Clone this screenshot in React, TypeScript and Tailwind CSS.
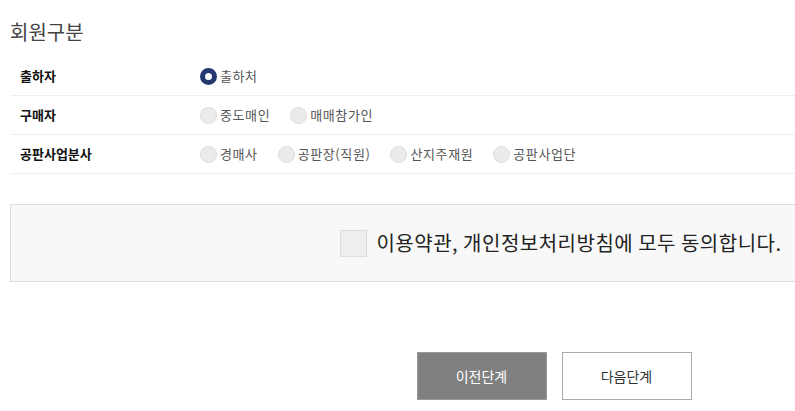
import React, { useState } from "react";

interface Row {
  label: string;
  options: string[];
}

const rows: Row[] = [
  { label: "출하자", options: ["출하처"] },
  { label: "구매자", options: ["중도매인", "매매참가인"] },
  { label: "공판사업분사", options: ["경매사", "공판장(직원)", "산지주재원", "공판사업단"] },
];

const Radio = ({ checked }: { checked: boolean }) =>
  checked ? (
    <span className="w-[17px] h-[17px] rounded-full border-[5px] border-[#22386f] bg-white shrink-0" />
  ) : (
    <span className="w-[17px] h-[17px] rounded-full border border-[#dcdcdc] bg-[#ebebeb] shrink-0" />
  );

const App = () => {
  const [selected, setSelected] = useState("출하처");
  const [agree, setAgree] = useState(false);

  return (
    <div
      className="w-full h-[411px] overflow-hidden bg-white"
      style={{ fontFamily: '"Noto Sans CJK KR", "Noto Sans", sans-serif' }}
    >
      <div className="w-[1088px] ml-[10px]">
        {/* 회원구분 */}
        <h2 className="pt-[20px] text-[20px] leading-[24px] text-[#444] font-normal">회원구분</h2>
        <div className="mt-[13px]">
          {rows.map((row) => (
            <div key={row.label} className="h-[39px] flex items-center border-b border-[#eeeeee]">
              <div className="w-[190px] pl-[10px] text-[13px] font-bold text-[#111]">{row.label}</div>
              <div className="flex items-center gap-[20px]">
                {row.options.map((opt) => (
                  <label
                    key={opt}
                    className="flex items-center gap-[3px] cursor-pointer"
                    onClick={() => setSelected(opt)}
                  >
                    <Radio checked={selected === opt} />
                    <span className="text-[13px] tracking-[0.6px] text-[#555]">{opt}</span>
                  </label>
                ))}
              </div>
            </div>
          ))}
        </div>

        {/* 약관 동의 */}
        <div className="mt-[30px] h-[78px] pl-[14px] border border-[#dddddd] bg-[#f8f8f8] flex items-center justify-center">
          <label className="flex items-center gap-[9px] cursor-pointer" onClick={() => setAgree(!agree)}>
            <span className="w-[27px] h-[27px] border border-[#dddddd] bg-[#eeeeee] flex items-center justify-center text-[#22386f]">
              {agree ? "✓" : ""}
            </span>
            <span className="text-[20px] text-[#222] tracking-[0.5px]">이용약관, 개인정보처리방침에 모두 동의합니다.</span>
          </label>
        </div>

        {/* 버튼 */}
        <div className="mt-[70px] flex justify-center gap-[15px]">
          <button className="w-[130px] h-[48px] bg-[#808080] border border-[#999] text-white text-[14px]">
            이전단계
          </button>
          <button className="w-[130px] h-[48px] bg-white border border-[#aaa] text-[#333] text-[14px]">
            다음단계
          </button>
        </div>
      </div>
    </div>
  );
};

export default App;
